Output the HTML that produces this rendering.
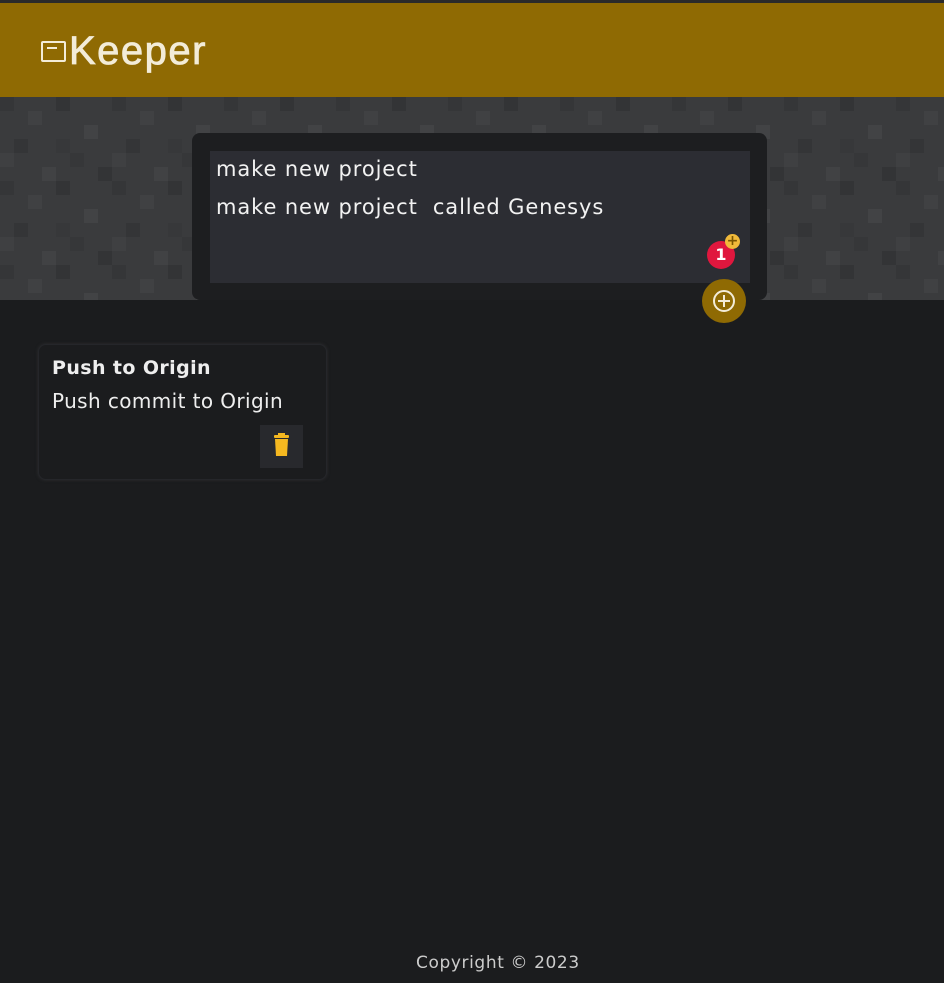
<!DOCTYPE html>
<html><head><style>
body{margin:0;width:944px;height:983px;background:#1b1c1e;font-family:"DejaVu Sans","Liberation Sans",sans-serif;position:relative;overflow:hidden}
.top{position:absolute;left:0;top:0;width:944px;height:3px;background:#2a2a2a}
header{position:absolute;left:0;top:3px;width:944px;height:94px;background:#8f6a03}
.logo{position:absolute;left:69px;top:26px;font-size:40px;color:#f3ecd8;font-family:"Liberation Sans",sans-serif;letter-spacing:1.5px;-webkit-text-stroke:0.8px #f3ecd8}
.ico{position:absolute;left:41px;top:38px;width:25px;height:21px;border:2px solid #f3ecd8;box-sizing:border-box;border-radius:2px}
.ico:after{content:"";position:absolute;left:4px;top:4px;width:10px;height:2px;background:#f3ecd8}
.band{position:absolute;left:0;top:97px;width:944px;height:203px;background:#3b3c3e}
.form{position:absolute;left:192px;top:133px;width:575px;height:167px;background:#1d1e20;border-radius:8px}
.ta{position:absolute;left:210px;top:151px;width:540px;height:132px;background:#2c2d33}
.t{position:absolute;left:216px;color:#f2f2f2;font-size:21px;letter-spacing:0.9px}
.badge{position:absolute;left:707px;top:241px;width:28px;height:28px;border-radius:50%;background:#e0173e;color:#fff;font-weight:bold;font-size:16px;text-align:center;line-height:28px}
.plus{position:absolute;left:725px;top:234px;width:15px;height:15px;border-radius:50%;background:#f0b93a;color:#7a5500;font-size:14px;line-height:15px;text-align:center;font-weight:bold}
.add{position:absolute;left:702px;top:279px;width:44px;height:44px;border-radius:50%;background:#8f6a03}
.card{position:absolute;left:38px;top:344px;width:289px;height:136px;background:#1b1c1e;border-radius:8px;box-shadow:0 0 3px #2e2f31;border:1px solid #25262a;box-sizing:border-box}
.h{position:absolute;left:52px;top:357px;font-size:19px;font-weight:bold;color:#eee;letter-spacing:0.4px}
.p{position:absolute;left:52px;top:389px;font-size:20px;color:#eee;letter-spacing:0.4px}
.del{position:absolute;left:260px;top:425px;width:43px;height:43px;background:#28292d}
.foot{position:absolute;top:953px;left:416px;color:#ccc;font-size:17px;letter-spacing:0.6px}
</style></head><body>
<div class="top"></div>
<header><div class="ico"></div><div class="logo">Keeper</div></header>
<svg class="band" width="944" height="203">
<defs><pattern id="p" width="112" height="84" patternUnits="userSpaceOnUse">
<rect width="112" height="84" fill="#3a3b3d"/>
<rect x="0" y="0" width="14" height="14" fill="#353638"/><rect x="28" y="14" width="14" height="14" fill="#404143"/>
<rect x="56" y="0" width="14" height="14" fill="#333436"/><rect x="84" y="28" width="14" height="14" fill="#424345"/>
<rect x="14" y="42" width="14" height="14" fill="#343537"/><rect x="70" y="56" width="14" height="14" fill="#363739"/>
<rect x="42" y="70" width="14" height="14" fill="#414244"/><rect x="98" y="70" width="14" height="14" fill="#333436"/>
<rect x="0" y="56" width="14" height="14" fill="#3f4042"/><rect x="56" y="42" width="14" height="14" fill="#37383a"/>
</pattern></defs><rect width="944" height="203" fill="url(#p)"/></svg>
<div class="form"></div>
<div class="ta"></div>
<div class="t" style="top:157px">make new project</div>
<div class="t" style="top:195px">make new project&nbsp; called Genesys</div>
<div class="badge">1</div><div class="plus">+</div>
<div class="add"><svg width="44" height="44"><circle cx="22" cy="22" r="10" fill="none" stroke="#f3ecd8" stroke-width="2"/><path d="M22 16v12M16 22h12" stroke="#f3ecd8" stroke-width="2"/></svg></div>
<div class="card"></div>
<div class="h">Push to Origin</div>
<div class="p">Push commit to Origin</div>
<div class="del"><svg width="43" height="43"><rect x="14" y="10" width="15" height="3" rx="1" fill="#f5b820"/><rect x="18" y="8" width="7" height="3" fill="#f5b820"/><path d="M15 14h13l-1 17h-11z" fill="#f5b820"/></svg></div>
<div class="foot">Copyright © 2023</div>
</body></html>
